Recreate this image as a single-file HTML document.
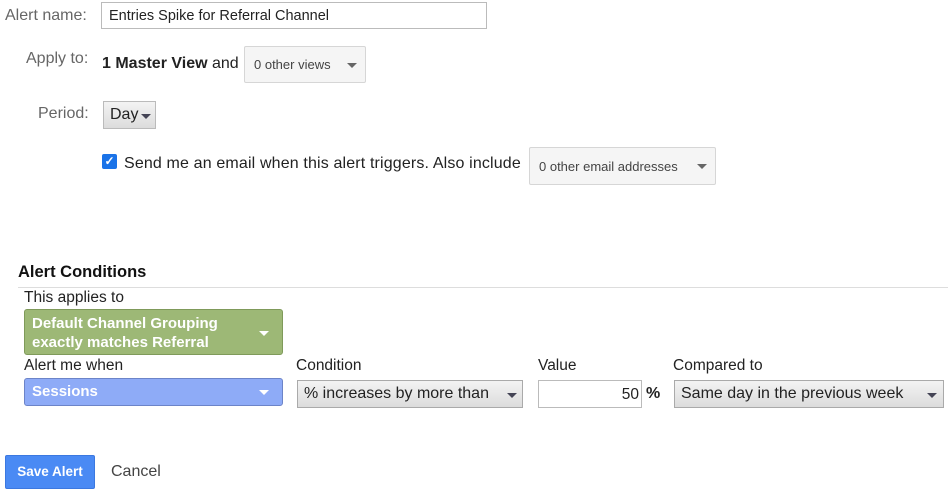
<!DOCTYPE html>
<html><head><style>
*{box-sizing:border-box;margin:0;padding:0}
body{width:948px;height:496px;background:#fff;font-family:"Liberation Sans",Arial,sans-serif;position:relative;overflow:hidden;color:#222}
.a{position:absolute;white-space:nowrap}
.lbl{color:#666;font-size:16px}
.dd{position:absolute;border:1px solid #d6d6d6;border-radius:2px;background:#f5f5f5;font-size:13px;color:#444;padding-left:9px;display:flex;align-items:center}
.tri{position:absolute;width:0;height:0;border-left:5px solid transparent;border-right:5px solid transparent;border-top:5px solid #666}
.sel{position:absolute;border:1px solid #aaa;background:linear-gradient(#f3f3f3,#dcdcdc);font-size:16px;color:#222;padding-left:6px;display:flex;align-items:center}
</style></head><body>
<div class="a lbl" style="left:5px;top:7px">Alert name:</div>
<div class="a" style="left:101px;top:2px;width:386px;height:27px;border:1px solid #bbb;font-size:14.5px;padding:5px 0 0 7px">Entries Spike for Referral Channel</div>

<div class="a lbl" style="left:26px;top:50px">Apply to:</div>
<div class="a" style="left:102px;top:55px;font-size:16px"><b>1 Master View</b> and</div>
<div class="dd" style="left:244px;top:46px;width:122px;height:37px">0 other views<span class="tri" style="left:102px;top:16px"></span></div>

<div class="a lbl" style="left:38px;top:105px">Period:</div>
<div class="sel" style="left:103px;top:101px;width:53px;height:28px;border-color:#bbb">Day<span class="tri" style="left:37px;top:12px;border-top-color:#445"></span></div>

<div class="a" style="left:102px;top:154px;width:15px;height:15px;background:#1a73e8;border-radius:2px;color:#fff;font-size:12px;line-height:15px;text-align:center;font-weight:bold">✓</div>
<div class="a" style="left:124px;top:155px;font-size:16px;letter-spacing:0.15px">Send me an email when this alert triggers. Also include</div>
<div class="dd" style="left:529px;top:147px;width:187px;height:38px">0 other email addresses<span class="tri" style="left:167px;top:16px"></span></div>

<div class="a" style="left:18px;top:263px;font-size:16.5px;font-weight:bold;color:#111">Alert Conditions</div>
<div class="a" style="left:18px;top:287px;width:930px;height:1px;background:#ddd"></div>
<div class="a" style="left:24px;top:289px;font-size:15.5px">This applies to</div>
<div class="a" style="left:24px;top:309px;width:259px;height:46px;background:#9db876;border:1px solid #7f9a5a;border-radius:3px;color:#fff;font-weight:bold;font-size:15px;line-height:19px;padding:4px 0 0 7px;white-space:normal">Default Channel Grouping<br>exactly matches Referral<span class="tri" style="left:234px;top:21px;border-top-color:#fff"></span></div>

<div class="a" style="left:24px;top:357px;font-size:15.5px">Alert me when</div>
<div class="a" style="left:296px;top:357px;font-size:15.5px">Condition</div>
<div class="a" style="left:538px;top:357px;font-size:15.5px">Value</div>
<div class="a" style="left:673px;top:357px;font-size:15.5px">Compared to</div>

<div class="a" style="left:24px;top:378px;width:259px;height:28px;background:#8eabf7;border:1px solid #6c84c8;border-radius:3px;color:#fff;font-weight:bold;font-size:15px;padding:4px 0 0 7px">Sessions<span class="tri" style="left:234px;top:11px;border-top-color:#fff"></span></div>
<div class="sel" style="left:297px;top:380px;width:226px;height:28px">% increases by more than<span class="tri" style="left:209px;top:12px;border-top-color:#445"></span></div>
<div class="a" style="left:538px;top:380px;width:104px;height:28px;border:1px solid #bbb;font-size:15.5px;text-align:right;padding:5px 2px 0 0">50</div>
<div class="a" style="left:646px;top:385px;font-size:16px;font-weight:bold">%</div>
<div class="sel" style="left:674px;top:380px;width:270px;height:28px">Same day in the previous week<span class="tri" style="left:252px;top:12px;border-top-color:#445"></span></div>

<div class="a" style="left:5px;top:455px;width:90px;height:34px;background:#4a8af4;border:1px solid #3b78e0;border-radius:2px;color:#fff;font-weight:bold;font-size:13.5px;line-height:32px;text-align:center">Save Alert</div>
<div class="a" style="left:111px;top:463px;font-size:16px;color:#444">Cancel</div>
</body></html>
